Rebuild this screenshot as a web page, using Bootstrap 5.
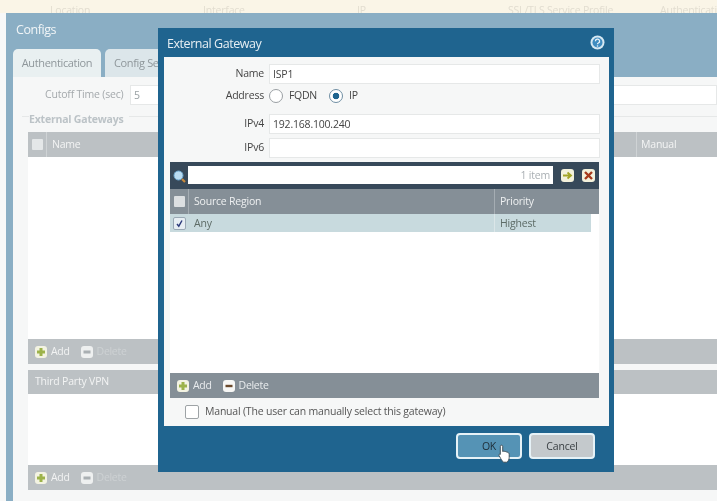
<!doctype html>
<html lang="en">
<head>
<meta charset="utf-8">
<title>External Gateway</title>
<link href="https://cdn.jsdelivr.net/npm/bootstrap@5.3.0/dist/css/bootstrap.min.css" rel="stylesheet">
<style>
html,body{width:717px;height:501px;overflow:hidden}
body{background:#f7f8f8;font-family:"Open Sans","Noto Sans",sans-serif;font-size:10.5px;letter-spacing:-.2px;color:#555;position:relative;margin:0}
.stage{filter:blur(.4px);width:717px;height:501px;overflow:hidden;position:relative}
.topband{height:13px;background:#faf5e7;color:#e2ddd0;font-size:10.5px;line-height:13px;overflow:hidden;padding-top:4px;padding-left:50px;box-sizing:border-box}
.topband span{display:block;flex:none}
.th1{width:153px}.th2{width:154px}.th3{width:151px}.th4{width:152px}
.cfgwin{margin-left:6px;background:#f6f7f7;border-left:7px solid #8aaec4;height:488px;display:flex;flex-direction:column}
.cfghead{height:64px;background:#8aaec4;color:#f1f5f7;flex:none;position:relative;display:flex;flex-direction:column;justify-content:space-between}
.cfgtitle{font-size:12.5px;padding:8px 0 0 3px;line-height:18px;letter-spacing:-.45px}
.tabrow{gap:4px;border:0;height:28px;flex-wrap:nowrap}
.tabrow .tabbtn{height:28px;border:0;border-radius:5px 5px 0 0;background:#e2ebee;color:#8f979b;font-size:11px;line-height:28px;padding:0 10px;white-space:nowrap;letter-spacing:-.35px}
.tabrow .tabon{background:#e9f0f1;width:88px;text-align:center;padding:0}
.tabrow .taboff{width:300px;padding-left:9px;background:#dce6ea}
.cutoff{height:20px;margin-top:8px;padding-left:32px;color:#a4a9ac;gap:0}
.cutoff span{width:85px;flex:none}
.cutoff .fieldinput{flex:1;color:#99a0a3}
.fieldinput{height:20px;border:1px solid #e6e8e8;border-radius:0;background:#fff;font-size:10.5px;padding:0 3px;font-family:inherit;color:#444;box-shadow:none;min-height:0;line-height:18px}
.gwset{margin:11px 0 0 9px;border-top:1px solid #e6e8e8;position:relative;flex:1}
.gwtitle{font-weight:700;color:#bcc3c7;font-size:10.5px;line-height:14px;margin-top:-5px;width:100px;background:#f6f7f7;height:14px;margin-left:7px}
.gwbody{margin:6px 0 0 6px;display:flex;flex-direction:column}
.bghead{height:25px;background:#bcc1c4;color:#f3f4f4;line-height:25px;font-size:10.5px;flex:none}
.bgcheck{width:19px;height:25px;border-right:1px solid #cfd3d5;flex:none;display:flex;align-items:center;justify-content:center}
.bgcheck i{display:block;width:11px;height:11px;background:#e4e7e8;border-radius:1px}
.bgname{padding-left:5px;width:590px;flex:none;border-right:1px solid #cfd3d5}
.bgman{padding-left:4px}
.bgblank{height:182px;background:#fff;flex:none}
.bgblank2{height:71px;background:#fff;flex:none}
.bgbar{height:25px;background:#bcc1c4;flex:none;color:#f2f3f3;padding-left:7px;line-height:25px;font-size:10.5px;letter-spacing:-.3px}
.bgbar svg{flex:none}
.bgvpn{margin-top:6px;height:24px;line-height:22px;padding-left:7px}
.dim{color:#cdd1d3}
.dlg{position:absolute;left:158px;top:28px;width:456px;height:444px;background:#1f648f;color:#555}
.dlgtitle{height:29px;color:#e6eef3;font-size:12.5px;line-height:31px;padding-left:9px;letter-spacing:-.45px;position:relative}
.helpico{position:absolute;right:9px;top:7px}
.dlgbody{margin:0 5px 0 6px;height:369px;background:#f6f7f7;padding:7px 9px 0 6px;display:flex;flex-direction:column}
.frow{gap:5px;flex:none}
.flabel{width:94px;text-align:right;font-size:10.5px;color:#444;flex:none}
.frow .fieldinput{flex:1;width:auto}
.r1{height:19px}.r2{height:31px;padding-bottom:5px}.r3{height:20px}.r4{height:19px;margin-top:4px}
.radopt{appearance:none;width:14px;height:14px;margin:0;border:1px solid #9a9fa3;border-radius:50%;background:#fff;float:none;flex:none}
.radopt:checked{background:radial-gradient(circle,#1f648f 0 3px,#fff 3.6px);border-color:#6f8ea3;background-color:#fff}
.radtxt{color:#444;margin-left:6px;font-size:10.5px}
.radfq{width:35px;flex:none;letter-spacing:-.3px}
.radgap{margin-left:5px}
.grid{height:236px;margin-top:5px;background:#fff;display:flex;flex-direction:column;flex:none;width:429px}
.gtool{height:27px;background:#37495a;padding:4px 3px 0 3px;gap:0;flex:none;align-items:flex-start}
.gsearch{width:365px;height:18px;background:#fff;text-align:right;color:#a9afb3;font-size:10.5px;line-height:18px;padding-right:3px;margin-left:2px;flex:none}
.tbtn{width:13px;height:13px;background:#f3f1dc;border-radius:3px;display:flex;align-items:center;justify-content:center;flex:none;margin-top:3px}
.ghead{height:25px;background:#858f97;color:#eef0f1;line-height:25px;font-size:10.5px;flex:none}
.gchk{width:19px;flex:none;display:flex;align-items:center;justify-content:center;border-right:1px solid #a5adb3}
.gchk i{display:block;width:11px;height:11px;background:#dcdfe1;border-radius:1px}
.gname{width:306px;padding-left:5px;border-right:1px solid #a5adb3;flex:none}
.gpri{padding-left:5px}
.grow{height:18px;background:#c8dade;width:421px;line-height:18px;color:#5d6b66;font-size:10.5px;flex:none}
.grow .gchk{border-right:0}
.grow .gname{border-right:1px solid #dbe6e8}
.chkon{width:13px;height:13px;background:#e7eef3;border:1px solid #9aa9b5;border-radius:2px;display:flex;align-items:center;justify-content:center}
.gfill{flex:1;background:#fff}
.gbar{height:25px;background:#858f97;flex:none;color:#e9ecee;padding-left:7px;line-height:25px;font-size:10.5px;letter-spacing:-.3px}
.bargap{margin-left:11px}
.mrow{padding-left:15px;height:28px;flex:none;color:#555;font-size:10.5px;gap:6px}
.mbox{width:14px;height:14px;border:1px solid #9ea3a6;border-radius:2px;background:#fff;margin:0;flex:none;appearance:none}
.dlgfoot{height:46px;padding:7px 19px 0 0;gap:7px}
.actbtn{width:66px;height:26px;border:2px solid #e6f2f7;border-radius:4px;padding:0;font-size:10.5px;line-height:21px;color:#1d2c36;font-family:inherit;letter-spacing:-.2px}
.actok{background:#5593b5}
.actcancel{background:#c4c9cc;color:#3a4044}
.hand{position:absolute;left:498px;top:444px}
</style>
</head>
<body>
<div class="stage">
  <div class="topband d-flex"><span class="th1">Location</span><span class="th2">Interface</span><span class="th3">IP</span><span class="th4">SSL/TLS Service Profile</span><span>Authentication</span></div>
  <div class="cfgwin">
    <div class="cfghead">
      <div class="cfgtitle">Configs</div>
      <div class="nav tabrow d-flex">
        <div class="tabbtn tabon">Authentication</div>
        <div class="tabbtn taboff">Config Selection Criteria</div>
      </div>
    </div>
    <div class="cutoff d-flex align-items-center">
      <span class="text-nowrap">Cutoff Time (sec)</span>
      <div class="fieldinput">5</div>
    </div>
    <div class="gwset">
      <div class="gwtitle">External Gateways</div>
      <div class="gwbody">
        <div class="bghead d-flex"><div class="bgcheck"><i></i></div><div class="bgname">Name</div><div class="bgman">Manual</div></div>
        <div class="bgblank"></div>
        <div class="bgbar d-flex align-items-center">
          <svg width="12" height="12" viewBox="0 0 12 12"><rect width="12" height="12" rx="3" fill="#f3f3e2"/><path d="M6 2v8M2 6h8" stroke="#9db34a" stroke-width="3"/></svg>
          <span class="ms-1">Add</span>
          <svg class="bargap" width="12" height="12" viewBox="0 0 12 12"><rect width="12" height="12" rx="3" fill="#eef0f0"/><path d="M2.500 6h7" stroke="#a9afb2" stroke-width="3"/></svg>
          <span class="ms-1 dim">Delete</span>
        </div>
        <div class="bghead bgvpn">Third Party VPN</div>
        <div class="bgblank2"></div>
        <div class="bgbar d-flex align-items-center">
          <svg width="12" height="12" viewBox="0 0 12 12"><rect width="12" height="12" rx="3" fill="#f3f3e2"/><path d="M6 2v8M2 6h8" stroke="#9db34a" stroke-width="3"/></svg>
          <span class="ms-1">Add</span>
          <svg class="bargap" width="12" height="12" viewBox="0 0 12 12"><rect width="12" height="12" rx="3" fill="#eef0f0"/><path d="M2.500 6h7" stroke="#a9afb2" stroke-width="3"/></svg>
          <span class="ms-1 dim">Delete</span>
        </div>
      </div>
    </div>
  </div>

  <div class="dlg">
    <div class="dlgtitle">External Gateway
      <svg class="helpico" width="15" height="15" viewBox="0 0 15 15"><circle cx="7.5" cy="7.5" r="7" fill="#d6e8f2"/><circle cx="7.5" cy="7.5" r="5" fill="#3f8cc0"/><path d="M5.400 6.200a2.100 2 0 1 1 3 1.800c-.6.3-.9.6-.9 1.200" fill="none" stroke="#eaf3f8" stroke-width="1.300"/><circle cx="7.500" cy="11" r=".8" fill="#eaf3f8"/></svg>
    </div>
    <div class="dlgbody">
      <div class="frow r1 d-flex align-items-center"><span class="flabel">Name</span><div class="fieldinput">ISP1</div></div>
      <div class="frow r2 d-flex align-items-center"><span class="flabel">Address</span>
        <div class="d-flex align-items-center">
          <input class="radopt" type="radio" name="addr"><span class="radtxt radfq">FQDN</span>
          <input class="radopt radgap" type="radio" name="addr" checked><span class="radtxt">IP</span>
        </div>
      </div>
      <div class="frow r3 d-flex align-items-center"><span class="flabel">IPv4</span><div class="fieldinput">192.168.100.240</div></div>
      <div class="frow r4 d-flex align-items-center"><span class="flabel">IPv6</span><div class="fieldinput"></div></div>
      <div class="grid">
        <div class="gtool d-flex">
          <svg class="mt-1" width="13" height="13" viewBox="0 0 13 13"><circle cx="5.500" cy="5.500" r="4.500" fill="#b9dcf2" stroke="#6fa9d0"/><path d="M9 9l3 3" stroke="#c98a3c" stroke-width="2.200"/></svg>
          <div class="gsearch">1 item</div>
          <div class="tbtn ms-2"><svg width="11" height="9" viewBox="0 0 11 9"><path d="M1 4.500h7M5.500 1.500l3.500 3-3.500 3" fill="none" stroke="#a3a528" stroke-width="1.800"/></svg></div>
          <div class="tbtn ms-2"><svg width="9" height="9" viewBox="0 0 9 9"><path d="M1 1l7 7M8 1L1 8" stroke="#a63a1c" stroke-width="2.400"/></svg></div>
        </div>
        <div class="ghead d-flex"><div class="gchk"><i></i></div><div class="gname">Source Region</div><div class="gpri">Priority</div></div>
        <div class="grow d-flex"><div class="gchk"><div class="chkon"><svg width="9" height="9" viewBox="0 0 9 9"><path d="M2 5l1.800 2.200L7 1.500" fill="none" stroke="#2b3a7a" stroke-width="1.400"/></svg></div></div><div class="gname">Any</div><div class="gpri">Highest</div></div>
        <div class="gfill"></div>
        <div class="gbar d-flex align-items-center">
          <svg width="12" height="12" viewBox="0 0 12 12"><rect width="12" height="12" rx="3" fill="#f3f3e2"/><path d="M6 2v8M2 6h8" stroke="#9db34a" stroke-width="3"/></svg>
          <span class="ms-1">Add</span>
          <svg class="bargap" width="12" height="12" viewBox="0 0 12 12"><rect width="12" height="12" rx="3" fill="#f7f7f5"/><path d="M2.500 6h7" stroke="#6b4a2c" stroke-width="2.400"/></svg>
          <span class="ms-1">Delete</span>
        </div>
      </div>
      <div class="mrow d-flex align-items-center"><input class="mbox" type="checkbox"><span>Manual (The user can manually select this gateway)</span></div>
    </div>
    <div class="dlgfoot d-flex justify-content-end">
      <button type="button" class="btn actbtn actok">OK</button>
      <button type="button" class="btn actbtn actcancel">Cancel</button>
    </div>
  </div>

  <svg class="hand" width="13" height="19" viewBox="0 0 13 19"><path d="M3.500 1.200c.8 0 1.200.6 1.200 1.300v5l1-.3 1 .2 1 .2 1 .4c1.500.3 2.500 1.100 2.500 2.400v3c0 2-1 4-2.500 4.800H5.500c-1-.8-2-2.500-3-4L1 11.400c-.4-.8.600-1.600 1.300-1V2.500c0-.7.400-1.300 1.200-1.300z" fill="#fff" stroke="#39474f" stroke-width=".9"/></svg>
</div>
</body>
</html>
